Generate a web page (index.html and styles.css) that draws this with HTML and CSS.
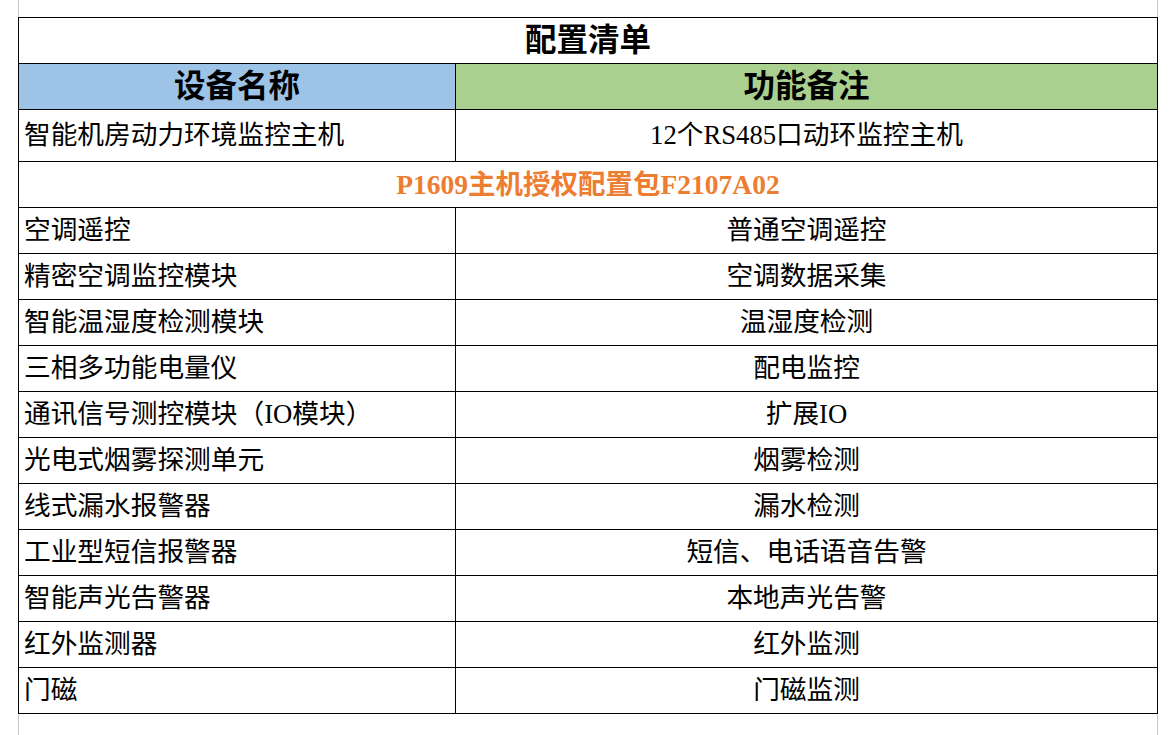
FILE: index.html
```html
<!DOCTYPE html>
<html lang="zh-CN">
<head>
<meta charset="utf-8">
<title>配置清单</title>
<link rel="stylesheet" href="styles.css">
</head>
<body>
<div class="sheet">
  <table class="config">
    <colgroup>
      <col class="col-name">
      <col class="col-note">
    </colgroup>
    <tr class="row-title"><td colspan="2" class="title">配置清单</td></tr>
    <tr class="row-head">
      <td class="head head-name">设备名称</td>
      <td class="head head-note">功能备注</td>
    </tr>
    <tr class="row-main">
      <td class="name">智能机房动力环境监控主机</td>
      <td class="note">12个RS485口动环监控主机</td>
    </tr>
    <tr class="row"><td colspan="2" class="pack">P1609主机授权配置包F2107A02</td></tr>
    <tr class="row"><td class="name">空调遥控</td><td class="note">普通空调遥控</td></tr>
    <tr class="row"><td class="name">精密空调监控模块</td><td class="note">空调数据采集</td></tr>
    <tr class="row"><td class="name">智能温湿度检测模块</td><td class="note">温湿度检测</td></tr>
    <tr class="row"><td class="name">三相多功能电量仪</td><td class="note">配电监控</td></tr>
    <tr class="row"><td class="name">通讯信号测控模块（IO模块）</td><td class="note">扩展IO</td></tr>
    <tr class="row"><td class="name">光电式烟雾探测单元</td><td class="note">烟雾检测</td></tr>
    <tr class="row"><td class="name">线式漏水报警器</td><td class="note">漏水检测</td></tr>
    <tr class="row"><td class="name">工业型短信报警器</td><td class="note">短信、电话语音告警</td></tr>
    <tr class="row"><td class="name">智能声光告警器</td><td class="note">本地声光告警</td></tr>
    <tr class="row"><td class="name">红外监测器</td><td class="note">红外监测</td></tr>
    <tr class="row"><td class="name">门磁</td><td class="note">门磁监测</td></tr>
  </table>
</div>
</body>
</html>
```

FILE: styles.css
```css
html, body {
  margin: 0;
  padding: 0;
  background: #ffffff;
}

body {
  font-family: "Liberation Serif", "Noto Sans CJK SC", serif;
  color: #000000;
}

.sheet {
  box-sizing: border-box;
  width: 1140px;
  height: 735px;
  margin-left: 18px;
  padding-top: 17px;
  border-left: 1px solid #c8c8c8;
  border-right: 1px solid #c8c8c8;
}

.config {
  border-collapse: collapse;
  table-layout: fixed;
  width: 1140px;
  margin-left: -1px;
}

.col-name { width: 437px; }

.config td {
  border: 1px solid #000000;
  padding: 0 5px;
  line-height: 1;
  white-space: nowrap;
  overflow: hidden;
  vertical-align: middle;
}

.row-title, .row-head, .row { height: 46px; }
.row-main { height: 52px; }

.title {
  text-align: center;
  font-size: 31.5px;
  font-weight: bold;
  padding-top: 7px;
}

.head {
  text-align: center;
  font-size: 31.5px;
  font-weight: bold;
  padding-top: 7px;
}

.head-name { background: #9dc3e6; }
.head-note { background: #a9d08e; }

.name {
  font-size: 26.7px;
  text-align: left;
  padding-top: 5px;
}

.note {
  font-size: 26.7px;
  text-align: center;
  padding-top: 5px;
}

.pack {
  font-size: 27.5px;
  text-align: center;
  color: #ed7d31;
  font-weight: bold;
  padding-top: 5px;
}
```
